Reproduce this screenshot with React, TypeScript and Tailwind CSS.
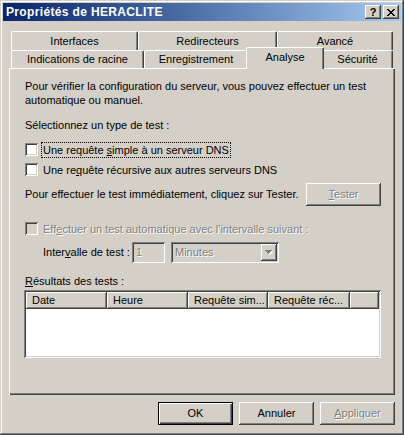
import React from "react";

const raised =
  "shadow-[inset_-1px_-1px_0_#404040,inset_1px_1px_0_#ffffff,inset_-2px_-2px_0_#808080]";
const sunken =
  "shadow-[inset_1px_1px_0_#808080,inset_-1px_-1px_0_#ffffff,inset_2px_2px_0_#404040,inset_-2px_-2px_0_#d4d0c8]";
const grayed = "text-[#808080] [text-shadow:1px_1px_0_#ffffff]";

function Check({ disabled }: { disabled?: boolean }) {
  return (
    <span
      className={`block h-[13px] w-[13px] shrink-0 ${sunken} ${disabled ? "bg-[#d4d0c8]" : "bg-white"}`}
    />
  );
}

function Button({
  children,
  disabled,
  isDefault,
}: {
  children: React.ReactNode;
  disabled?: boolean;
  isDefault?: boolean;
}) {
  if (isDefault) {
    return (
      <div className="flex h-[23px] w-[75px] items-center justify-center border border-black shadow-[inset_1px_1px_0_#ffffff,inset_-1px_-1px_0_#404040,inset_-2px_-2px_0_#808080]">
        {children}
      </div>
    );
  }
  return (
    <div
      className={`flex h-[23px] w-[75px] items-center justify-center ${raised} ${disabled ? grayed : ""}`}
    >
      <span>{children}</span>
    </div>
  );
}

function Tab({ label, w, selected }: { label: string; w: string; selected?: boolean }) {
  if (selected) {
    return (
      <div
        className={`relative z-10 -mx-[2px] -mt-[3px] flex h-[22px] ${w} shrink-0 items-center justify-center rounded-t-[2px] border-l border-t border-r border-white border-r-[#404040] bg-[#d4d0c8] pb-[3px] shadow-[inset_-1px_0_0_#808080]`}
      >
        {label}
      </div>
    );
  }
  return (
    <div
      className={`flex h-full ${w} shrink-0 items-center justify-center rounded-t-[2px] border-l border-t border-r border-white border-r-[#404040] shadow-[inset_-1px_0_0_#808080]`}
    >
      {label}
    </div>
  );
}

function TitleBar() {
  return (
    <div className="flex h-[18px] items-center bg-linear-to-r from-[#0a246a] to-[#a6caf0] pl-[3px] pr-[2px]">
      <span className="text-[12px] font-bold tracking-[0.35px] text-white">Propriétés de HERACLITE</span>
      <div className="ml-auto flex gap-[2px]">
        <div className={`flex h-[14px] w-[16px] items-center justify-center bg-[#d4d0c8] ${raised}`}>
          <span className="text-[11px] font-bold leading-none">?</span>
        </div>
        <div className={`flex h-[14px] w-[16px] items-center justify-center bg-[#d4d0c8] ${raised}`}>
          <svg width="8" height="7" viewBox="0 0 8 7" shapeRendering="crispEdges">
            <path d="M0 0h2v1h-2zM6 0h2v1h-2zM1 1h2v1h-2zM5 1h2v1h-2zM2 2h4v1h-4zM3 3h2v1h-2zM2 4h4v1h-4zM1 5h2v1h-2zM5 5h2v1h-2zM0 6h2v1h-2zM6 6h2v1h-2z" fill="#000" />
          </svg>
        </div>
      </div>
    </div>
  );
}

function Tabs() {
  return (
    <div className="mt-[10px] pl-[8px]">
      <div className="flex h-[19px]">
        <Tab label="Interfaces" w="w-[127px]" />
        <Tab label="Redirecteurs" w="w-[139px]" />
        <Tab label="Avancé" w="w-[116px]" />
      </div>
      <div className="flex h-[18px] items-start">
        <Tab label="Indications de racine" w="w-[133px]" />
        <Tab label="Enregistrement" w="w-[104px]" />
        <Tab label="Analyse" w="w-[78px]" selected />
        <Tab label="Sécurité" w="w-[71px]" />
      </div>
    </div>
  );
}

function Panel() {
  return (
    <div className="ml-[6px] flex h-[327px] w-[386px] flex-col pl-[16px] pt-[11px] shadow-[inset_1px_1px_0_#ffffff,inset_-1px_-1px_0_#404040,inset_-2px_-2px_0_#808080]">
      <p className="h-[28px] leading-[14px]">
        Pour vérifier la configuration du serveur, vous pouvez effectuer un test
        <br />
        automatique ou manuel.
      </p>

      <div className="mt-[11px] h-[14px] leading-[14px]">Sélectionnez un type de test :</div>

      <div className="mt-[9px] flex h-[17px] items-center">
        <Check />
        <span className="ml-[3px] block h-[16px] border border-dotted border-black px-[1px] leading-[14px]">
          Une requête <span className="underline">s</span>imple à un serveur DNS
        </span>
      </div>

      <div className="mt-[3px] flex h-[17px] items-center">
        <Check />
        <span className="ml-[3px] block h-[16px] border border-transparent px-[1px] leading-[14px]">
          Une re<span className="underline">q</span>uête récursive aux autres serveurs DNS
        </span>
      </div>

      <div className="mt-[5px] flex h-[23px] w-[356px] items-center justify-between">
        <span>Pour effectuer le test immédiatement, cliquez sur Tester.</span>
        <Button disabled>
          <span className="underline">T</span>ester
        </Button>
      </div>

      <div className="mt-[14px] flex h-[17px] items-center">
        <Check disabled />
        <span className={`ml-[3px] block h-[16px] border border-transparent px-[1px] leading-[14px] ${grayed}`}>
          Eff<span className="underline">e</span>ctuer un test automatique avec l'intervalle suivant :
        </span>
      </div>

      <div className="mt-[5px] flex h-[21px] items-center pl-[18px]">
        <span className="w-[89px] shrink-0">
          Inter<span className="underline">v</span>alle de test :
        </span>
        <div className={`flex h-[21px] w-[33px] items-center bg-[#d4d0c8] pl-[4px] ${sunken} ${grayed}`}>1</div>
        <div className={`ml-[6px] flex h-[21px] w-[108px] items-center bg-[#d4d0c8] p-[2px] ${sunken}`}>
          <span className={`flex-1 pl-[2px] ${grayed}`}>Minutes</span>
          <div className={`flex h-[17px] w-[16px] items-center justify-center ${raised}`}>
            <svg width="8" height="5" viewBox="0 0 8 5" shapeRendering="crispEdges">
              <path d="M1 1h7v1h-1v1h-1v1h-1v1h-1v-1h-1v-1h-1v-1h-1z" fill="#ffffff" />
              <path d="M0 0h7v1h-1v1h-1v1h-1v1h-1v-1h-1v-1h-1v-1h-1z" fill="#808080" />
            </svg>
          </div>
        </div>
      </div>

      <div className="mt-[11px] h-[14px] leading-[14px]">
        <span className="underline">R</span>ésultats des tests :
      </div>

      <div className={`-ml-[1px] mt-[2px] h-[68px] w-[357px] bg-white p-[2px] ${sunken}`}>
        <div className="flex h-[17px] bg-[#d4d0c8]">
          {[
            ["Date", "w-[81px]"],
            ["Heure", "w-[81px]"],
            ["Requête sim...", "w-[80px]"],
            ["Requête réc...", "w-[82px]"],
          ].map(([label, w]) => (
            <div key={label} className={`flex ${w} shrink-0 items-center pl-[6px] ${raised}`}>
              {label}
            </div>
          ))}
          <div className={`flex-1 ${raised}`} />
        </div>
      </div>
    </div>
  );
}

function Footer() {
  return (
    <div className="mt-[7px] flex gap-[6px] pl-[155px]">
      <Button isDefault>OK</Button>
      <Button>Annuler</Button>
      <Button disabled>
        <span className="underline">A</span>ppliquer
      </Button>
    </div>
  );
}

export default function App() {
  return (
    <div className="flex h-[435px] w-[404px] flex-col bg-[#d4d0c8] p-[3px] font-['Liberation_Sans',Arial,sans-serif] text-[11px] leading-[13px] text-black shadow-[inset_-1px_-1px_0_#404040,inset_1px_1px_0_#d4d0c8,inset_-2px_-2px_0_#808080,inset_2px_2px_0_#ffffff]">
      <TitleBar />
      <Tabs />
      <Panel />
      <Footer />
    </div>
  );
}
